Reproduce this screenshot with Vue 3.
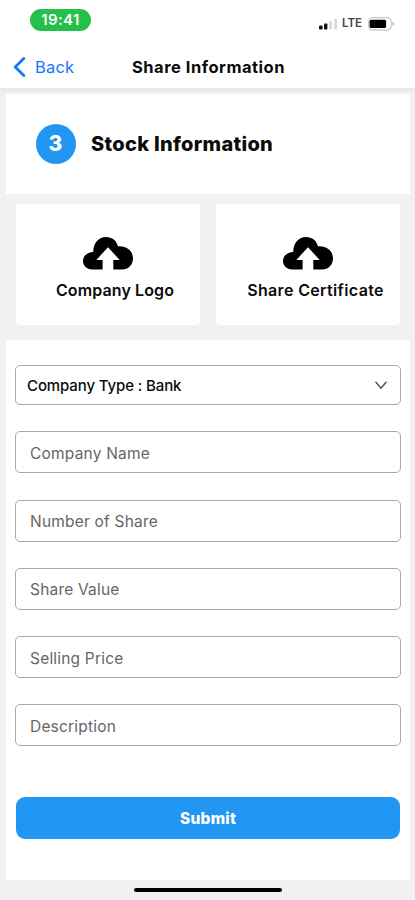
<script setup>
const uploads = [
  { label: 'Company Logo', cls: 'logo' },
  { label: 'Share Certificate', cls: 'certificate' },
]
const fields = ['Company Name', 'Number of Share', 'Share Value', 'Selling Price', 'Description']
</script>

<template>
  <div class="screen">
    <header class="top">
      <div class="status">
        <span class="clock">19:41</span>
        <div class="indicators">
          <svg class="signal" width="19" height="12" viewBox="0 0 19 12">
            <rect x="0" y="7.5" width="3.6" height="4" rx="1" fill="#111" />
            <rect x="5" y="5.5" width="3.4" height="6" rx="1" fill="#111" />
            <rect x="10" y="3" width="3.2" height="8.5" rx="1" fill="#ddd" />
            <rect x="15" y="0.5" width="3.2" height="11" rx="1" fill="#ddd" />
          </svg>
          <span class="network">LTE</span>
          <svg class="battery" width="27" height="14" viewBox="0 0 27 14">
            <rect x="0.6" y="0.7" width="22.6" height="12.4" rx="3.6" fill="#fff" stroke="#bbb" />
            <rect x="1.6" y="2.8" width="16.5" height="8.2" rx="1.5" fill="#000" />
            <path d="M24.5 4.8q3 2 0 4.2z" fill="#aaa" />
          </svg>
        </div>
      </div>
      <nav class="nav">
        <a class="back">
          <svg width="13" height="20" viewBox="0 0 13 20">
            <path d="M10.8 1.5L2.2 10l8.6 8.5" fill="none" stroke="#1677ff" stroke-width="2.8" stroke-linecap="round" stroke-linejoin="round" />
          </svg>
          <span>Back</span>
        </a>
        <h1>Share Information</h1>
      </nav>
    </header>

    <section class="step">
      <span class="number">3</span>
      <h2>Stock Information</h2>
    </section>

    <section class="uploads">
      <button v-for="u in uploads" :key="u.label" class="upload" :class="u.cls">
        <svg width="50" height="33" viewBox="0 0 50 33">
          <path d="M9 32.5C4 32.5 0 28.8 0 24c0-4.800 3.800-8.600 10.300-8.900C10 6.500 15.500 0 23 0c6.300 0 10.400 3.500 12 9.400C43.500 8.700 50 14 50 21.500c0 6.200-4.500 11-11 11z" fill="#000" />
          <path d="M25 10.200L36.700 23H30.300V33H19.600V23H13.300z" fill="#fff" />
        </svg>
        <span>{{ u.label }}</span>
      </button>
    </section>

    <form class="form" @submit.prevent>
      <div class="select">
        <span>Company Type : Bank</span>
        <svg width="12" height="9" viewBox="0 0 12 9">
          <path d="M1 1.200l5 6 5-6" fill="none" stroke="#555" stroke-width="1.500" stroke-linecap="round" stroke-linejoin="round" />
        </svg>
      </div>
      <div v-for="f in fields" :key="f" class="field">{{ f }}</div>
      <button class="submit">Submit</button>
    </form>

    <footer class="home"><span></span></footer>
  </div>
</template>

<style>
body {
  background: #f1f1f1;
}
</style>

<style scoped>
.screen {
  box-sizing: border-box;
  width: 415px;
  height: 900px;
  overflow: hidden;
  background: #f1f1f1;
  font-family: Inter, "Liberation Sans", sans-serif;
  color: #0b0b0b;
}
h1, h2 {
  margin: 0;
}
button {
  border: 0;
  padding: 0;
  font-family: inherit;
  color: inherit;
}
.top {
  box-sizing: border-box;
  height: 91px;
  background: #fff;
  border-bottom: 3px solid #e9e9e9;
}
.status {
  display: flex;
  justify-content: space-between;
  align-items: flex-start;
  height: 44px;
  box-sizing: border-box;
  padding: 9px 20px 0 30px;
}
.clock {
  width: 61px;
  height: 22px;
  border-radius: 11px;
  background: #25c04b;
  color: #fff;
  font-size: 15px;
  font-weight: 600;
  letter-spacing: 0.400px;
  line-height: 22px;
  text-align: center;
}
.indicators {
  display: flex;
  align-items: center;
  padding-top: 7px;
}
.network {
  margin-left: 4px;
  width: 21px;
  font-size: 11.500px;
  line-height: 15px;
  font-weight: 600;
  color: #444;
}
.battery {
  margin-left: 5px;
}
.nav {
  display: flex;
  align-items: center;
  height: 45px;
  padding-left: 13px;
}
.back {
  display: flex;
  align-items: center;
  gap: 9px;
  width: 119px;
  color: #1677ff;
  font-size: 16.500px;
  letter-spacing: 0.200px;
}
h1 {
  font-size: 16.500px;
  font-weight: 700;
  letter-spacing: 0.510px;
}
.step {
  display: flex;
  align-items: center;
  gap: 15.500px;
  height: 100px;
  margin: 3px 5px 0 6px;
  padding-left: 29.500px;
  box-sizing: border-box;
  background: #fff;
}
.number {
  width: 40px;
  height: 40px;
  border-radius: 50%;
  background: #2196f3;
  color: #fff;
  font-size: 21px;
  font-weight: 800;
  line-height: 40px;
  text-align: center;
}
h2 {
  font-size: 20px;
  font-weight: 800;
  letter-spacing: 0.300px;
}
.uploads {
  display: grid;
  grid-template-columns: 1fr 1fr;
  gap: 16px;
  padding: 10px 15px 15px 16px;
}
.upload {
  display: flex;
  flex-direction: column;
  align-items: center;
  box-sizing: border-box;
  height: 121px;
  padding-top: 33px;
  border-radius: 4px;
  background: #fff;
  font-size: 16px;
  font-weight: 600;
  line-height: 20px;
}
.upload span {
  margin-top: 9.500px;
  padding-left: 14px;
  letter-spacing: 0.120px;
  white-space: nowrap;
}
.upload.certificate span {
  padding-left: 15px;
  letter-spacing: 0.350px;
}
.form {
  box-sizing: border-box;
  height: 540px;
  margin: 0 5px 0 6px;
  padding: 25px 9px 0;
  background: #fff;
}
.select,
.field {
  display: flex;
  align-items: center;
  box-sizing: border-box;
  border: 1px solid #aaa;
  border-radius: 5px;
  font-size: 15px;
}
.select {
  justify-content: space-between;
  height: 40px;
  padding: 0 13px 0 11px;
  font-weight: 500;
  letter-spacing: -0.120px;
}
.field {
  height: 42px;
  margin-top: 26.300px;
  padding: 2px 0 0 14px;
  color: #666;
  font-size: 15.500px;
  letter-spacing: 0.200px;
}
.submit {
  display: block;
  width: 384px;
  height: 42px;
  margin: 50.500px 0 0 1px;
  padding-top: 1px;
  border-radius: 9px;
  background: #2196f3;
  color: #fff;
  font-size: 15.500px;
  font-weight: 800;
  letter-spacing: 0.250px;
}
.home {
  display: flex;
  justify-content: center;
  padding-top: 8px;
}
.home span {
  width: 148px;
  height: 4px;
  border-radius: 2px;
  background: #000;
}
</style>
